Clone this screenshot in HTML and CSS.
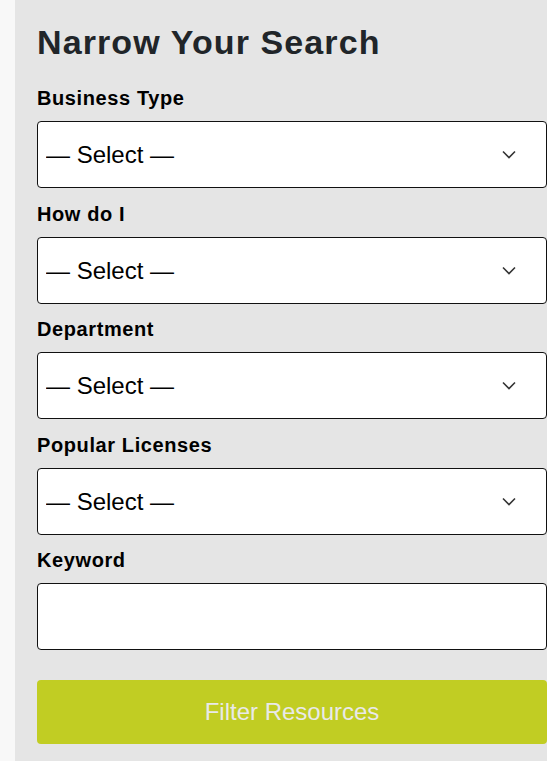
FILE: index.html
```html
<!DOCTYPE html>
<html lang="en">
<head>
<meta charset="utf-8">
<title>Narrow Your Search</title>
<link rel="stylesheet" href="styles.css">
</head>
<body>
<div class="page">
  <aside class="panel">
    <h2 class="title">Narrow Your Search</h2>
    <form class="form">
      <div class="group">
        <label class="label" for="f1">Business Type</label>
        <div class="select-wrap">
          <select id="f1" class="select"><option>— Select —</option></select>
          <svg class="chev" width="14" height="9" viewBox="0 0 14 9"><polyline points="1,1.5 7,7.5 13,1.5" fill="none" stroke="#333" stroke-width="1.6"/></svg>
        </div>
      </div>
      <div class="group">
        <label class="label" for="f2">How do I</label>
        <div class="select-wrap">
          <select id="f2" class="select"><option>— Select —</option></select>
          <svg class="chev" width="14" height="9" viewBox="0 0 14 9"><polyline points="1,1.5 7,7.5 13,1.5" fill="none" stroke="#333" stroke-width="1.6"/></svg>
        </div>
      </div>
      <div class="group">
        <label class="label" for="f3">Department</label>
        <div class="select-wrap">
          <select id="f3" class="select"><option>— Select —</option></select>
          <svg class="chev" width="14" height="9" viewBox="0 0 14 9"><polyline points="1,1.5 7,7.5 13,1.5" fill="none" stroke="#333" stroke-width="1.6"/></svg>
        </div>
      </div>
      <div class="group">
        <label class="label" for="f4">Popular Licenses</label>
        <div class="select-wrap">
          <select id="f4" class="select"><option>— Select —</option></select>
          <svg class="chev" width="14" height="9" viewBox="0 0 14 9"><polyline points="1,1.5 7,7.5 13,1.5" fill="none" stroke="#333" stroke-width="1.6"/></svg>
        </div>
      </div>
      <div class="group">
        <label class="label" for="f5">Keyword</label>
        <input id="f5" class="input" type="text">
      </div>
      <button type="button" class="btn">Filter Resources</button>
    </form>
  </aside>
</div>
</body>
</html>
```
FILE: styles.css
```css
html, body {
  margin: 0;
  padding: 0;
  background: #f8f8f8;
  font-family: "Liberation Sans", Arial, sans-serif;
}
.page {
  padding-left: 15px;
  min-height: 761px;
  display: flex;
}
.panel {
  flex: 1;
  background: #e5e5e5;
  padding: 22px 0 40px 22px;
}
.title {
  margin: 0 0 24px 0;
  font-size: 34px;
  line-height: 40px;
  font-weight: 700;
  letter-spacing: 1.1px;
  color: #212529;
}
.form {
  display: flex;
  flex-direction: column;
}
.group {
  display: flex;
  flex-direction: column;
  margin-bottom: 13.5px;
}
.label {
  font-size: 20px;
  line-height: 24px;
  font-weight: 700;
  letter-spacing: 0.6px;
  color: #000;
  margin-bottom: 11px;
}
.select-wrap {
  position: relative;
}
.select, .input {
  box-sizing: border-box;
  width: 100%;
  height: 67px;
  margin: 0;
  border: 1px solid #111;
  border-radius: 4px;
  background: #fff;
  font-family: "Liberation Sans", Arial, sans-serif;
  font-size: 24px;
  color: #000;
  padding: 0 0 0 8px;
  -webkit-appearance: none;
  appearance: none;
  outline: none;
}
.chev {
  position: absolute;
  right: 31px;
  top: 29px;
  pointer-events: none;
}
.btn {
  margin-top: 16.5px;
  height: 64px;
  width: 100%;
  border: none;
  border-radius: 4px;
  background: #c1cd23;
  color: #e9e9e9;
  font-family: "Liberation Sans", Arial, sans-serif;
  font-size: 24px;
  cursor: pointer;
}
```
